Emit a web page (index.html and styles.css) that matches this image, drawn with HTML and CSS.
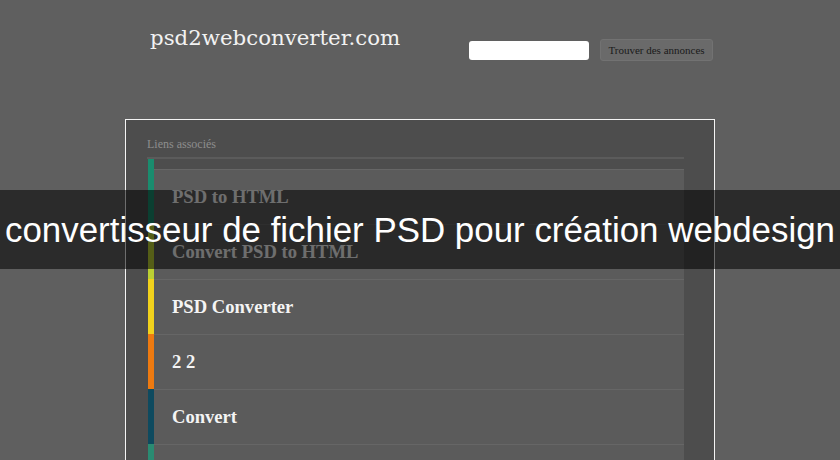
FILE: index.html
```html
<!DOCTYPE html>
<html lang="fr">
<head>
<meta charset="utf-8">
<title>psd2webconverter.com</title>
<link rel="stylesheet" href="styles.css">
</head>
<body>
<div class="wrap">
  <header class="header">
    <div class="logo">psd2webconverter.com</div>
    <form class="search">
      <input class="search-input" type="text">
      <button class="search-btn" type="button">Trouver des annonces</button>
    </form>
  </header>
  <section class="panel">
    <div class="panel-title">Liens associés</div>
    <ul class="links">
      <li class="item first"><span class="bar c1"></span><span class="body">PSD to HTML</span></li>
      <li class="item"><span class="bar c2"></span><span class="body">Convert PSD to HTML</span></li>
      <li class="item"><span class="bar c3"></span><span class="body">PSD Converter</span></li>
      <li class="item"><span class="bar c4"></span><span class="body">2 2</span></li>
      <li class="item"><span class="bar c5"></span><span class="body">Convert</span></li>
      <li class="item"><span class="bar c6"></span><span class="body"></span></li>
    </ul>
  </section>
</div>
<div class="banner">convertisseur de fichier PSD pour création webdesign</div>
</body>
</html>
```

FILE: styles.css
```css
html, body {
  margin: 0;
  padding: 0;
}
body {
  background: #5f5f5f;
  height: 460px;
  overflow: hidden;
  font-family: "Liberation Serif", "Times New Roman", serif;
}
.wrap {
  width: 590px;
  margin: 0 auto;
}
.header {
  display: flex;
  align-items: flex-start;
  height: 119px;
}
.logo {
  margin: 24px 0 0 25px;
  font-family: "DejaVu Serif", serif;
  font-size: 21.3px;
  color: #f2f2f2;
  line-height: 28px;
}
.search {
  display: flex;
  align-items: center;
  margin: 39px 0 0 auto;
  gap: 11px;
  padding-right: 2px;
}
.search-input {
  width: 120px;
  height: 19px;
  box-sizing: border-box;
  border: none;
  border-radius: 3px;
  background: #ffffff;
  margin: 0;
  padding: 0;
}
.search-btn {
  height: 22px;
  width: 113px;
  box-sizing: border-box;
  border: 1px solid #727272;
  border-radius: 3px;
  background: #6a6a6a;
  color: #1a1a1a;
  font-family: "Liberation Serif", serif;
  font-size: 11px;
  padding: 0;
  margin: 0;
}
.panel {
  border: 1px solid #f4f4f4;
  border-bottom: none;
  background: #4d4d4d;
  padding: 17px 30px 0 21px;
  height: 324px;
  overflow: hidden;
}
.panel-title {
  font-size: 12px;
  color: #8e8e8e;
  line-height: 14px;
  height: 20px;
}
.links {
  list-style: none;
  margin: 0;
  padding: 0;
  border-top: 2px solid #5b5b5b;
}
.item {
  display: flex;
  height: 55px;
  margin-left: 1px;
}
.item.first {
  height: 65px;
}
.bar {
  width: 6px;
  flex: none;
}
.body {
  flex: 1;
  display: flex;
  align-items: center;
  background: #5b5b5b;
  border-top: 1px solid #666666;
  padding-left: 18px;
  font-weight: bold;
  font-size: 18.6px;
  color: #f4f4f4;
}
.item.first .body {
  margin-top: 10px;
}
.c1 { background: #1a8c6e; }
.c2 { background: #bcd033; }
.c3 { background: #f2d21c; }
.c4 { background: #ee7a10; }
.c5 { background: #0e4a5f; }
.c6 { background: #2a8b72; }
.banner {
  position: absolute;
  left: 0;
  top: 190px;
  width: 840px;
  height: 79px;
  background: rgba(0, 0, 0, 0.55);
  color: #ffffff;
  font-family: "Liberation Sans", Arial, sans-serif;
  font-size: 34.9px;
  line-height: 79px;
  text-align: center;
  white-space: nowrap;
}
```
